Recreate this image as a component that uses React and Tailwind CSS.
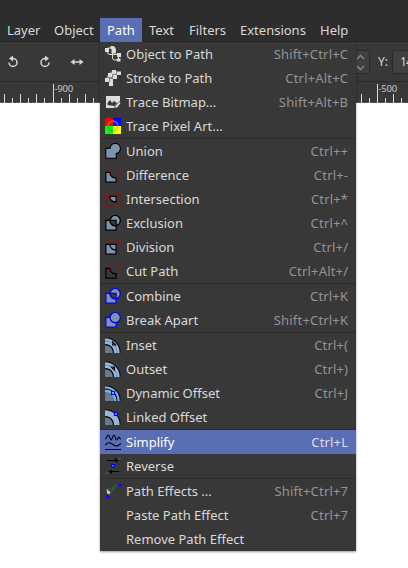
import React from 'react';

const Svg = ({ children }) => (
  <svg width="16" height="16" viewBox="0 0 16 16" fill="none" className="block shrink-0">{children}</svg>
);

const SQ = 'M.9 5.4H11.1V15.2H.9Z';
const LENS = 'M4.900 5.400H11.100V10.800C7.500 11.200 4.900 8.700 4.900 5.400Z';
const FILL = '#7d94af';

const DashedCircle = () => (
  <circle cx="10.200" cy="5.600" r="5.200" stroke="#c00000" strokeWidth="1" strokeDasharray="1.300 .9" />
);

const Offset = ({ children }) => (
  <Svg>
    <path d="M0 .5C8 .5 15.500 7 15.500 16H9C9 11 5 7 0 7Z" fill="#94b6d9" />
    <path d="M0 8C5 8 8 12 8 16H0Z" fill="#6c7b8b" />
    <path d="M0 .7C8 .7 15.200 7 15.200 16" stroke="#000" strokeWidth="1.100" />
    <path d="M0 7.700C5 7.700 8.500 11 8.500 16" stroke="#000" strokeWidth="1.100" />
    {children}
  </Svg>
);

const icons = {
  object: (
    <Svg>
      <path d="M3 2H8M2.500 4V6Q2.500 8.500 5 8.500H12.500M7.500 7V12Q7.500 14 10 14H13.500V10" stroke="#ddd" strokeWidth="1" />
      <path d="M5.500 0H8.500Q11 1 11 4V7.500H6.500V3H5.500Z" fill="#ddd" />
      <path d="M0 2H4V6H0ZM12 7H16V11H12ZM12 12.500H15.500V15.500H12Z" fill="#ddd" />
    </Svg>
  ),
  stroke: (
    <Svg>
      <path d="M1 10L2 6L6 1.500L12 1V5L8 8L6 12L2 12Z" fill="#858585" />
      <path d="M7 0H11V4H7ZM12 1.500H16V5H12ZM3 3H7V7H3ZM0 8H4V12H0ZM8 5H12V9H8ZM5 9H8V12H5ZM4 12H8V16H4Z" fill="#ddd" />
    </Svg>
  ),
  bitmap: (
    <Svg>
      <path d="M1 2H15V8L10 12V14H1Z" fill="#ddd" />
      <path d="M2.500 11V9L5 6L7 9L9 7L12 9L9.500 12Z" fill="#383838" />
      <path d="M10 12L14.500 7.500L16 9L12 14H9.500Z" fill="#ddd" stroke="#383838" strokeWidth=".7" />
    </Svg>
  ),
  pixel: (
    <Svg>
      <path d="M0 0H8V8H0Z" fill="#f00" /><path d="M8 0H16V8H8Z" fill="#00f" />
      <path d="M0 8H8V16H0Z" fill="#0f0" /><path d="M8 8H16V16H8Z" fill="#ff0" />
      <path d="M3 8A5 5 0 0 1 8 3" stroke="#c66a25" strokeWidth="1.300" />
      <path d="M8 3A5 5 0 0 1 13 8" stroke="#6670ed" strokeWidth="1.300" />
      <path d="M13 8A5 5 0 0 1 8 13" stroke="#aacc42" strokeWidth="1.300" />
      <path d="M8 13A5 5 0 0 1 3 8" stroke="#48a83d" strokeWidth="1.300" />
    </Svg>
  ),
  union: (
    <Svg>
      <path d={SQ} stroke="#000" strokeWidth="1.200" />
      <circle cx="10.200" cy="5.600" r="5.100" stroke="#000" strokeWidth="1.200" />
      <path d="M1.400 5.900H10.600V14.700H1.400Z" fill={FILL} />
      <circle cx="10.200" cy="5.600" r="4.600" fill={FILL} />
    </Svg>
  ),
  difference: (
    <Svg>
      <DashedCircle />
      <path d="M.9 5.400H4.900C4.900 8.700 7.500 11.200 11.100 10.800V15.200H.9Z" fill={FILL} stroke="#000" strokeWidth="1.200" />
    </Svg>
  ),
  intersection: (
    <Svg>
      <DashedCircle />
      <path d={SQ} stroke="#c00000" strokeDasharray="1.300 .9" />
      <path d={LENS} fill={FILL} stroke="#000" strokeWidth="1.200" />
    </Svg>
  ),
  exclusion: (
    <Svg>
      <path d={SQ} fill={FILL} stroke="#000" strokeWidth="1.200" />
      <circle cx="10.200" cy="5.600" r="5.100" fill={FILL} stroke="#000" strokeWidth="1.200" />
      <path d={LENS} fill="#383838" stroke="#000" strokeWidth="1.200" />
    </Svg>
  ),
  division: (
    <Svg>
      <DashedCircle />
      <path d={SQ} fill={FILL} stroke="#000" strokeWidth="1.200" />
      <path d="M4.900 5.400C4.900 8.700 7.500 11.200 11.100 10.800" stroke="#000" strokeWidth="1.200" />
    </Svg>
  ),
  cut: (
    <Svg>
      <DashedCircle />
      <path d="M4.900 5.400H.9V15.200H11.100V10.800C7.500 11.200 4.900 8.700 4.900 5.400Z" stroke="#000" strokeWidth="1.200" />
    </Svg>
  ),
  combine: (
    <Svg>
      <path d={SQ} fill={FILL} stroke="#0000f0" strokeWidth="1.200" />
      <circle cx="10.200" cy="5.600" r="5.100" fill={FILL} stroke="#0000f0" strokeWidth="1.200" />
      <path d={LENS} fill="#383838" stroke="#0000f0" strokeWidth="1.200" />
    </Svg>
  ),
  apart: (
    <Svg>
      <path d={SQ} fill={FILL} stroke="#0000f0" strokeWidth="1.200" />
      <circle cx="10.200" cy="5.600" r="5.100" fill={FILL} stroke="#0000f0" strokeWidth="1.200" />
    </Svg>
  ),
  inset: <Offset><path d="M7 3.500V8.500H12Z" fill="#000" /><path d="M0 4C7 4 12 9 12 16" stroke="#53687d" strokeWidth=".5" /></Offset>,
  outset: <Offset><path d="M5 5.500H10V10.500Z" fill="#000" /><path d="M0 4C7 4 12 9 12 16" stroke="#53687d" strokeWidth=".5" /></Offset>,
  dynamic: (
    <Svg>
      <path d="M0 .5C8 .5 15.500 7 15.500 16H0Z" fill="#7fb0e4" />
      <path d="M0 8C5 8 8 12 8 16H0Z" fill="#6c7b8b" />
      <path d="M0 .7C8 .7 15.200 7 15.200 16M0 4C7 4 12 9 12 16" stroke="#000" strokeWidth="1.100" />
      <path d="M0 7.700C5 7.700 8.500 11 8.500 16" stroke="#45607c" strokeWidth="1" />
      <path d="M6.500 6.500H9.500V9.500H6.500Z" fill="#8fb2d6" stroke="#00f" strokeWidth="1.100" />
    </Svg>
  ),
  linked: <Offset><path d="M9.500 3.500H12.500V6.500H9.500Z" fill="#778ea9" stroke="#00f" strokeWidth="1.200" /></Offset>,
  simplify: (
    <Svg>
      <path d="M0 5C1.500 5 2 1 3.500 1S4.500 6 6 6S7.500 1 9 1S10 6 11.500 6S12.500 3 13.500 3S14.500 5 16 5" stroke="#000" strokeWidth="1.100" />
      <path d="M0 11C3 8 5 8 8 10.500S13 12 16 9.500M0 15.500H16" stroke="#000" strokeWidth="1.200" />
    </Svg>
  ),
  reverse: (
    <Svg>
      <path d="M0 15.500C6 14 5 10 8 8S10 1 16 .5" stroke="#656565" />
      <path d="M2 2.500H12M14 13.500H5" stroke="#000" strokeWidth="1.200" />
      <path d="M10 0L14 2.500L10 5ZM7 11L3 13.500L7 16Z" fill="#000" />
      <path d="M6.500 6.500H9.500V9.500H6.500Z" fill="#5361a5" stroke="#00f" strokeWidth="1.200" />
    </Svg>
  ),
  effects: (
    <Svg>
      <path d="M3 8L12 1.500M4 12L10 4M3 5V10" stroke="#555" strokeWidth="1.200" />
      <path d="M3 10C5 6 8 3.500 13 2.500" stroke="#0a6b16" strokeWidth="1.400" />
      <path d="M1.500 6L5 9V10.500L2.500 11Z" fill="#ddd" />
      <path d="M13.500 1H15.500V3H13.500ZM1.500 13H3.500V15H1.500Z" fill="#3344aa" stroke="#00f" />
    </Svg>
  ),
  none: <Svg />,
};

const groups = [
  [
    ['object', 'Object to Path', 'Shift+Ctrl+C'],
    ['stroke', 'Stroke to Path', 'Ctrl+Alt+C'],
    ['bitmap', 'Trace Bitmap...', 'Shift+Alt+B'],
    ['pixel', 'Trace Pixel Art...', ''],
  ],
  [
    ['union', 'Union', 'Ctrl++'],
    ['difference', 'Difference', 'Ctrl+-'],
    ['intersection', 'Intersection', 'Ctrl+*'],
    ['exclusion', 'Exclusion', 'Ctrl+^'],
    ['division', 'Division', 'Ctrl+/'],
    ['cut', 'Cut Path', 'Ctrl+Alt+/'],
  ],
  [
    ['combine', 'Combine', 'Ctrl+K'],
    ['apart', 'Break Apart', 'Shift+Ctrl+K'],
  ],
  [
    ['inset', 'Inset', 'Ctrl+('],
    ['outset', 'Outset', 'Ctrl+)'],
    ['dynamic', 'Dynamic Offset', 'Ctrl+J'],
    ['linked', 'Linked Offset', ''],
  ],
  [
    ['simplify', 'Simplify', 'Ctrl+L'],
    ['reverse', 'Reverse', ''],
  ],
  [
    ['effects', 'Path Effects ...', 'Shift+Ctrl+7'],
    ['none', 'Paste Path Effect', 'Ctrl+7'],
    ['none', 'Remove Path Effect', ''],
  ],
];

const tabs = [
  ['Layer', 'w-[47px] pl-[7px]'],
  ['Object', 'w-[53px] pl-[7px]'],
  ['Path', 'w-[42px] pl-[7px] bg-[#5a6eb5] text-white'],
  ['Text', 'w-[40px] pl-[7px]'],
  ['Filters', 'w-[51px] pl-[7px]'],
  ['Extensions', 'w-[80px] pl-[7px]'],
  ['Help', 'w-[60px] pl-[7px]'],
];

const ticks = [
  [4, 94], [12, 98], [20, 94], [28, 98], [36, 94], [44, 98], [53, 84], [61, 98], [69, 94], [77, 98], [85, 94], [93, 98],
  [361, 94], [369, 98], [377, 84], [385, 98], [393, 94], [401, 98],
];

function Menu() {
  return (
    <div className="absolute left-[100px] top-[42px] w-[256px] bg-[#383838] shadow-[0_1px_2px_rgba(0,0,0,0.4)]">
      {groups.map((rows, g) => (
        <div key={g} className={g ? 'border-t border-[#2d2d2d]' : ''}>
          {rows.map(([icon, label, keys]) => {
            const on = icon === 'simplify';
            return (
              <div key={label} className={`flex h-6 items-center pl-[5px] pr-[7.8px] ${on ? 'bg-[#5a6eb5]' : ''}`}>
                {icons[icon]}
                <span className={`ml-[5px] flex-1 ${on ? 'text-white' : 'text-[#d8d8d8]'}`}>{label}</span>
                <span className={`tracking-[0.18px] ${on ? 'text-[#dcdfec]' : 'text-[#949494]'}`}>{keys}</span>
              </div>
            );
          })}
        </div>
      ))}
    </div>
  );
}

export default function App() {
  return (
    <div className="relative h-[568px] w-[408px] overflow-hidden whitespace-pre bg-white font-['Noto_Sans',sans-serif] text-[13px] leading-6 text-[#d8d8d8]">
      <div className="h-[42px] border-b border-[#232323] bg-[#2d2d2d] pt-[18px]">
        <div className="flex h-6">
          {tabs.map(([t, c]) => <div key={t} className={`h-6 shrink-0 ${c}`}>{t}</div>)}
        </div>
      </div>
      <div className="flex h-10 items-center border-b border-[#292929] bg-[#383838]">
        <svg width="100" height="39" viewBox="0 42 100 39" fill="none" stroke="#d8d8d8" strokeWidth="1.5" className="shrink-0">
          <path d="M12.500 58.500H13A4 4 0 1 1 9 62.500" />
          <path d="M13 55.500V61.500L9 58.500Z" fill="#d8d8d8" stroke="none" />
          <path d="M45.500 58.500H45A4 4 0 1 0 49 62.500" />
          <path d="M45 55.500V61.500L49 58.500Z" fill="#d8d8d8" stroke="none" />
          <path d="M73 62H81" />
          <path d="M74.500 59V65L70.500 62ZM79.500 59V65L83.500 62Z" fill="#d8d8d8" stroke="none" />
        </svg>
        <div className="ml-[240px] flex h-6 w-[30px] shrink-0 items-center justify-end rounded-[3px] border border-[#292929] bg-[#404040]">
          <svg width="12" height="22" viewBox="0 0 12 22" fill="none" stroke="#8b8b8b" strokeWidth="1.3">
            <path d="M0 8L3.500 4.500L7 8M0 15L3.500 18.500L7 15" />
          </svg>
        </div>
        <span className="ml-2 w-[14px] shrink-0 text-[12px]">Y:</span>
        <div className="flex h-6 w-10 shrink-0 items-center rounded-[3px] border border-[#292929] bg-[#404040] pl-[7px] text-[12px] tracking-[-0.8px]">14</div>
      </div>
      <div className="h-[21px] border-b border-[#555] bg-[#383838]">
        <svg width="408" height="21" viewBox="0 82 408 21" className="block" shapeRendering="crispEdges">
          {ticks.map(([x, y]) => <rect key={x} x={x} y={y} width="1" height={103 - y} fill="#d8d8d8" />)}
          <text x="54.500" y="92" fontSize="9.5" letterSpacing="-0.2" fill="#c8c8c8">-900</text>
          <text x="378.500" y="92" fontSize="9.5" letterSpacing="-0.2" fill="#c8c8c8">-500</text>
        </svg>
      </div>
      <Menu />
    </div>
  );
}
